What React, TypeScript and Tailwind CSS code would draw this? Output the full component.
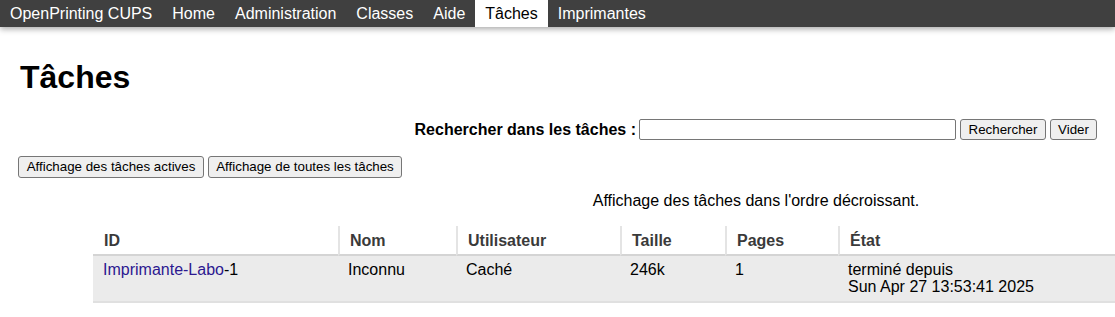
const navItems = ['OpenPrinting CUPS', 'Home', 'Administration', 'Classes', 'Aide', 'Tâches', 'Imprimantes']

const columns = ['ID', 'Nom', 'Utilisateur', 'Taille', 'Pages', 'État']

export default function App() {
  return (
    <div className="min-h-[317px] bg-white text-black font-['Liberation_Sans',Arial,sans-serif]">
      {/* Barre de navigation */}
      <nav className="flex h-[27px] bg-[#404040] shadow-[0_2px_6px_rgba(0,0,0,0.35)]">
        {navItems.map((item) => (
          <span
            key={item}
            className={
              item === 'Tâches'
                ? 'px-[10px] text-[16px] leading-[27px] bg-white text-black'
                : 'px-[10px] text-[16px] leading-[27px] text-white'
            }
          >
            {item}
          </span>
        ))}
      </nav>

      <div className="px-[18px]">
        <h1 className="mt-[32px] pl-[2px] text-[32px] leading-[37px] font-bold">Tâches</h1>

        {/* Recherche */}
        <form className="mt-[23px] flex items-center justify-end gap-[4px]">
          <label className="mr-[-1px] text-[16px] leading-[21px] font-bold">Rechercher dans les tâches :</label>
          <input
            type="text"
            className="h-[21px] w-[317px] rounded-[2px] border border-[#767676] bg-white px-[2px] text-[13px]"
          />
          <button
            type="button"
            className="h-[21px] w-[86px] rounded-[3px] border border-[#767676] bg-[#efefef] text-[13.33px] leading-[19px]"
          >
            Rechercher
          </button>
          <button
            type="button"
            className="h-[21px] w-[47px] rounded-[3px] border border-[#767676] bg-[#efefef] text-[13.33px] leading-[19px]"
          >
            Vider
          </button>
        </form>

        <div className="mt-[16px] flex gap-[4px]">
          <button
            type="button"
            className="h-[22px] w-[186px] rounded-[3px] border border-[#767676] bg-[#efefef] text-[13.33px] leading-[20px]"
          >
            Affichage des tâches actives
          </button>
          <button
            type="button"
            className="h-[22px] w-[194px] rounded-[3px] border border-[#767676] bg-[#efefef] text-[13.33px] leading-[20px]"
          >
            Affichage de toutes les tâches
          </button>
        </div>
      </div>

      <p className="mt-[14px] pl-[397px] text-center text-[16px] leading-[18px]">
        Affichage des tâches dans l'ordre décroissant.
      </p>

      {/* Liste des tâches */}
      <div className="mt-[16px] pl-[93px]">
        <div className="grid grid-cols-[245px_118px_164px_105px_113px_1fr]">
          {columns.map((col, i) => (
            <div
              key={col}
              className={
                i === 0
                  ? 'border-b-2 border-[#d4d4d4] px-[11px] pt-[6px] pb-[4px] text-[16px] leading-[18px] font-bold text-[#3a3a3a]'
                  : 'border-b-2 border-l-2 border-b-[#d4d4d4] border-l-[#e4e4e4] px-[10px] pt-[6px] pb-[4px] text-[16px] leading-[18px] font-bold text-[#3a3a3a]'
              }
            >
              {col}
            </div>
          ))}

          <div className="bg-[#ebebeb] border-b-2 border-[#e0e0e0] px-[10px] pt-[5px] pb-[5px] text-[16px] leading-[17px]">
            <a href="#" className="text-[#2c1890]">Imprimante-Labo</a>-1
          </div>
          <div className="bg-[#ebebeb] border-b-2 border-[#e0e0e0] px-[10px] pt-[5px] text-[16px] leading-[17px]">Inconnu</div>
          <div className="bg-[#ebebeb] border-b-2 border-[#e0e0e0] px-[10px] pt-[5px] text-[16px] leading-[17px]">Caché</div>
          <div className="bg-[#ebebeb] border-b-2 border-[#e0e0e0] px-[10px] pt-[5px] text-[16px] leading-[17px]">246k</div>
          <div className="bg-[#ebebeb] border-b-2 border-[#e0e0e0] px-[10px] pt-[5px] text-[16px] leading-[17px]">1</div>
          <div className="bg-[#ebebeb] border-b-2 border-[#e0e0e0] px-[10px] pt-[5px] pb-[6px] text-[16px] leading-[17px]">
            terminé depuis
            <br />
            Sun Apr 27 13:53:41 2025
          </div>
        </div>
      </div>
    </div>
  )
}
